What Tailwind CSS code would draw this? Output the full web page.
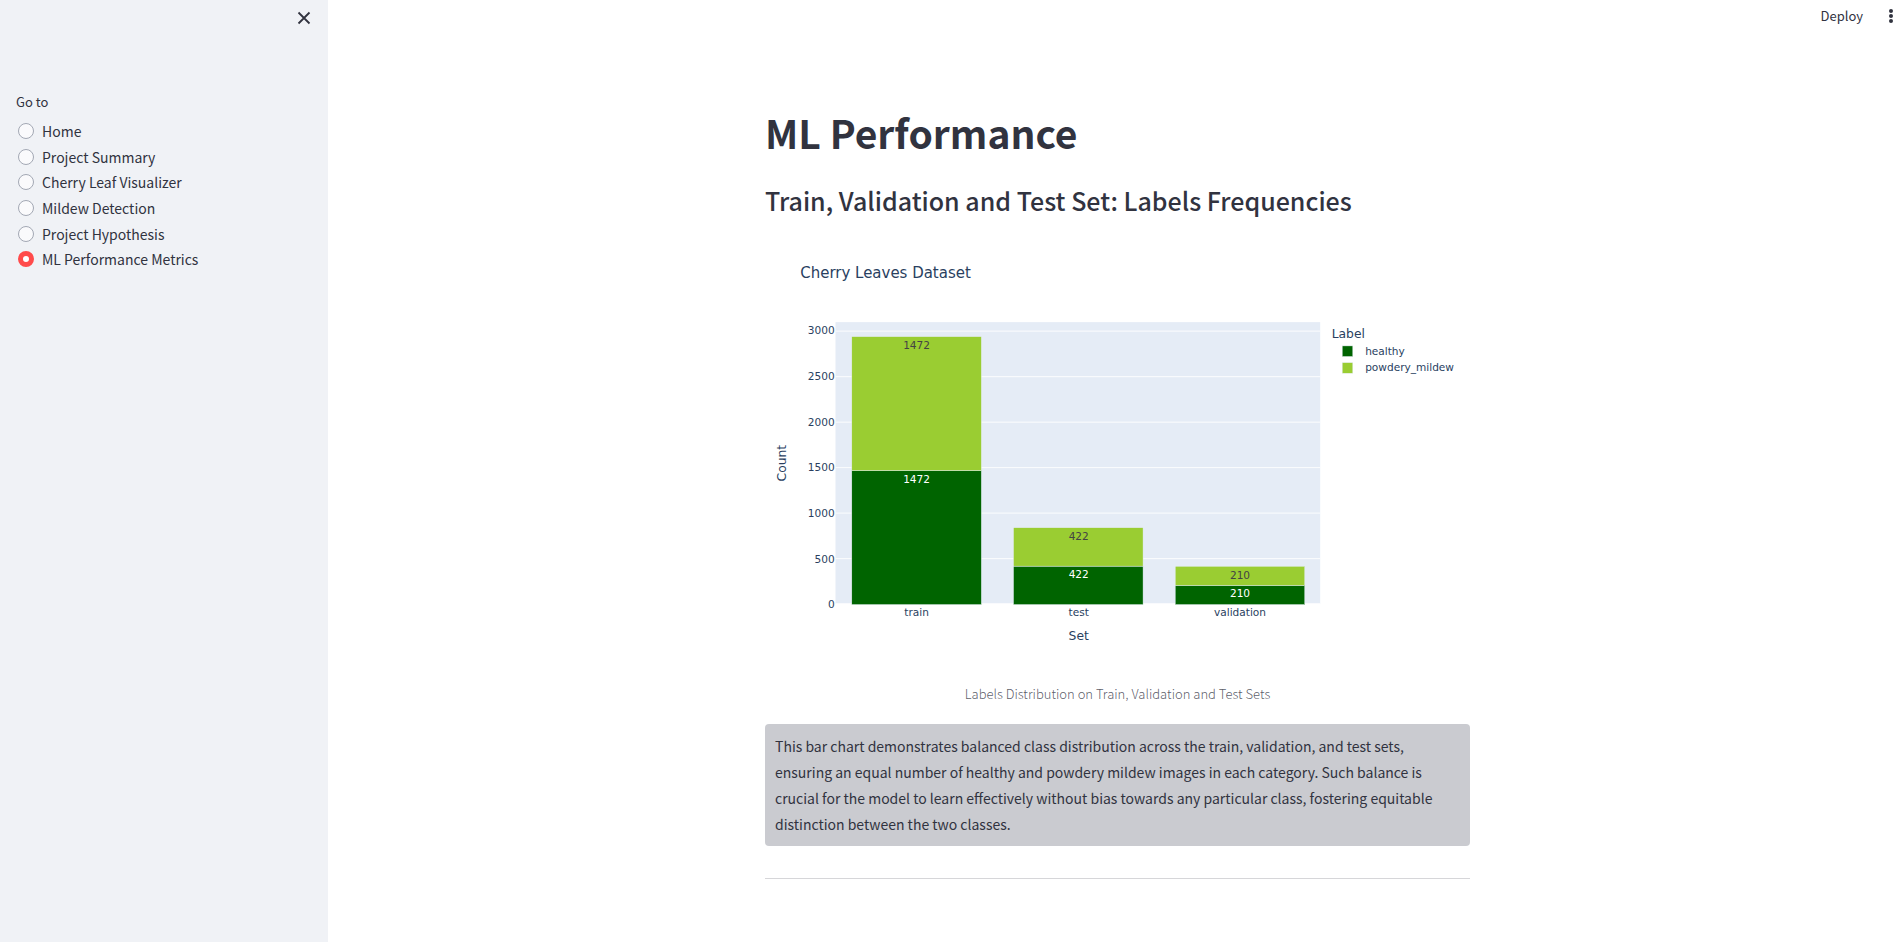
<!DOCTYPE html>
<html lang="en">
<head>
<meta charset="utf-8">
<meta name="viewport" content="width=device-width, initial-scale=1">
<title>ML Performance</title>
<script src="https://cdn.jsdelivr.net/npm/@tailwindcss/browser@4"></script>
</head>
<body class="flex min-h-screen bg-white font-['Noto_Sans_CJK_SC',sans-serif] text-[#31333f]">
  <aside class="w-[328px] shrink-0 bg-[#f0f2f6]">
    <div class="flex justify-end pt-[10px] pr-[16px]">
      <button type="button" aria-label="Close sidebar" class="flex size-4 items-center justify-center">
        <svg viewBox="0 0 16 16" class="size-4" fill="none" stroke="#31333f" stroke-width="1.8"><path d="M2.5 2.5 13.5 13.5M13.5 2.5 2.5 13.5"/></svg>
      </button>
    </div>
    <fieldset class="px-4 pt-[65px]">
      <legend class="contents"><span class="block text-[13px] leading-[22px]">Go to</span></legend>
      <div class="mt-[5px] flex h-[154px] flex-col text-sm">
        <label class="flex flex-1 items-center gap-2 pl-[2px]"><input type="radio" name="page" class="size-4 appearance-none rounded-full border border-[#a3a8b4] bg-[#fafafc] checked:border-[5px] checked:border-[#ff4b4b] checked:bg-white">Home</label>
        <label class="flex flex-1 items-center gap-2 pl-[2px]"><input type="radio" name="page" class="size-4 appearance-none rounded-full border border-[#a3a8b4] bg-[#fafafc] checked:border-[5px] checked:border-[#ff4b4b] checked:bg-white">Project Summary</label>
        <label class="flex flex-1 items-center gap-2 pl-[2px]"><input type="radio" name="page" class="size-4 appearance-none rounded-full border border-[#a3a8b4] bg-[#fafafc] checked:border-[5px] checked:border-[#ff4b4b] checked:bg-white">Cherry Leaf Visualizer</label>
        <label class="flex flex-1 items-center gap-2 pl-[2px]"><input type="radio" name="page" class="size-4 appearance-none rounded-full border border-[#a3a8b4] bg-[#fafafc] checked:border-[5px] checked:border-[#ff4b4b] checked:bg-white">Mildew Detection</label>
        <label class="flex flex-1 items-center gap-2 pl-[2px]"><input type="radio" name="page" class="size-4 appearance-none rounded-full border border-[#a3a8b4] bg-[#fafafc] checked:border-[5px] checked:border-[#ff4b4b] checked:bg-white">Project Hypothesis</label>
        <label class="flex flex-1 items-center gap-2 pl-[2px]"><input type="radio" name="page" checked class="size-4 appearance-none rounded-full border border-[#a3a8b4] bg-[#fafafc] checked:border-[5px] checked:border-[#ff4b4b] checked:bg-white">ML Performance Metrics</label>
      </div>
    </fieldset>
  </aside>

  <div class="ml-[7px] flex min-w-0 flex-1 flex-col">
    <header class="flex h-8 items-center justify-end gap-[22px] pr-[3px]">
      <button type="button" class="text-[13px] leading-8">Deploy</button>
      <button type="button" aria-label="Menu" class="flex h-8 items-center">
        <svg viewBox="0 0 12 16" class="h-4 w-3" fill="#31333f"><circle cx="6" cy="3" r="2"/><circle cx="6" cy="8" r="2"/><circle cx="6" cy="13" r="2"/></svg>
      </button>
    </header>

    <main class="mx-auto w-full max-w-[705px] pt-[74px]">
      <h1 class="text-[39px] leading-[52px] font-bold">ML Performance</h1>
      <h2 class="mt-[25px] text-[25px] leading-[34px] font-medium">Train, Validation and Test Set: Labels Frequencies</h2>

      <figure class="mt-[17px]">
        <svg viewBox="0 0 800 500" class="block w-full font-['DejaVu_Sans',sans-serif]" role="img" aria-label="Cherry Leaves Dataset">
          <rect x="80" y="100" width="550" height="320" fill="#e5ecf6"/>
          <g stroke="#ffffff">
            <path d="M80 368.4H630M80 316.7H630M80 265.1H630M80 213.5H630M80 161.9H630M80 110.2H630"/>
            <path d="M80 420H630" stroke-width="2"/>
          </g>
          <g stroke="#e5ecf6" stroke-width="0.5" fill="#006400">
            <rect x="98.5" y="268.5" width="147" height="152"/>
            <rect x="282" y="376.9" width="147" height="43.6"/>
            <rect x="465.5" y="398.8" width="147" height="21.7"/>
          </g>
          <g stroke="#e5ecf6" stroke-width="0.5" fill="#9acd32">
            <rect x="98.5" y="116.5" width="147" height="152"/>
            <rect x="282" y="333.3" width="147" height="43.6"/>
            <rect x="465.5" y="377.1" width="147" height="21.7"/>
          </g>
          <g font-size="12" text-anchor="middle" fill="#444444">
            <text x="172" y="130">1472</text><text x="356" y="347">422</text><text x="539" y="391">210</text>
          </g>
          <g font-size="12" text-anchor="middle" fill="#ffffff">
            <text x="172" y="282">1472</text><text x="356" y="390">422</text><text x="539" y="412">210</text>
          </g>
          <g fill="#2a3f5f">
            <text x="40" y="50" font-size="17">Cherry Leaves Dataset</text>
            <g font-size="12" text-anchor="end">
              <text x="79" y="424">0</text><text x="79" y="373">500</text><text x="79" y="321">1000</text><text x="79" y="269">1500</text><text x="79" y="218">2000</text><text x="79" y="166">2500</text><text x="79" y="114">3000</text>
            </g>
            <g font-size="12" text-anchor="middle">
              <text x="172" y="433">train</text><text x="356" y="433">test</text><text x="539" y="433">validation</text>
            </g>
            <text x="356" y="461" font-size="14" text-anchor="middle">Set</text>
            <text transform="translate(24 260) rotate(-90)" font-size="14" text-anchor="middle">Count</text>
            <text x="643" y="118" font-size="14">Label</text>
            <text x="681" y="137" font-size="12">healthy</text>
            <text x="681" y="156" font-size="12">powdery_mildew</text>
          </g>
          <g stroke="#e5ecf6" stroke-width="0.5">
            <rect x="655" y="127" width="12" height="12" fill="#006400"/>
            <rect x="655" y="146" width="12" height="12" fill="#9acd32"/>
          </g>
        </svg>
        <figcaption class="mt-[8px] text-center text-[13px] leading-[22px] font-light text-[#31333f]/80">Labels Distribution on Train, Validation and Test Sets</figcaption>
      </figure>

      <div class="mt-[19px] rounded bg-[#cacbd0] py-[9px] pr-5 pl-[10px]">
        <p class="text-sm leading-[26px]">This bar chart demonstrates balanced class distribution across the train, validation, and test sets, ensuring an equal number of healthy and powdery mildew images in each category. Such balance is crucial for the model to learn effectively without bias towards any particular class, fostering equitable distinction between the two classes.</p>
      </div>
      <hr class="mt-8 border-[#d6d6d9]">
    </main>
  </div>
</body>
</html>
